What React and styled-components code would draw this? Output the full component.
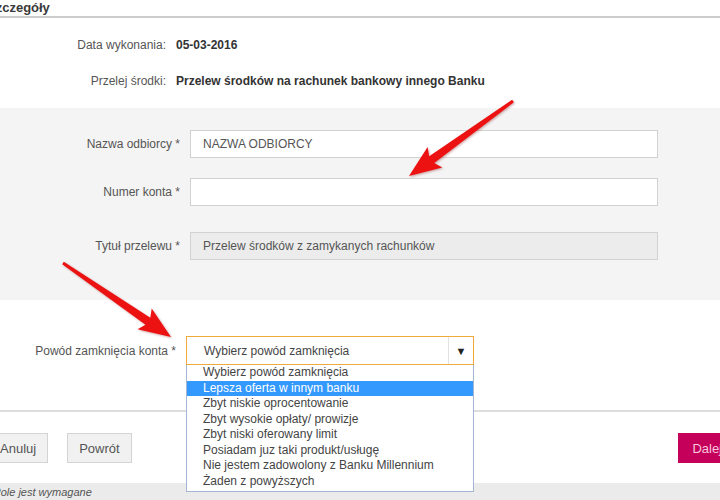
import React from 'react';
import styled, { createGlobalStyle } from 'styled-components';

const GlobalStyle = createGlobalStyle`
  html, body {
    margin: 0;
    padding: 0;
    background: #ffffff;
    overflow: hidden;
  }
  body {
    font-family: 'Liberation Sans', Arial, sans-serif;
    font-size: 12px;
    color: #555555;
  }
`;

const Screen = styled.div`
  position: relative;
  width: 720px;
  height: 500px;
  overflow: hidden;
`;

const Page = styled.div`
  width: 750px;
  margin-left: -14px;
  display: flex;
  flex-direction: column;
`;

const HeaderBar = styled.div`
  height: 16px;
  line-height: 16px;
  padding-left: 1px;
  border-bottom: 2px solid #cccccc;
  font-size: 13px;
  font-weight: 700;
  color: #3a3a3a;
`;

const InfoSection = styled.div`
  display: flex;
  flex-direction: column;
  padding: 9px 0;
`;

const InfoRow = styled.div`
  display: flex;
  align-items: center;
  gap: 10px;
  height: 36px;
`;

const Label = styled.div`
  width: ${(p) => p.$width}px;
  flex-shrink: 0;
  text-align: right;
  color: #555555;
  white-space: nowrap;
`;

const Value = styled.div`
  font-weight: 700;
  color: #333333;
`;

const GreySection = styled.div`
  display: flex;
  flex-direction: column;
  background: #f4f4f4;
  padding: 22px 0 40px;
`;

const FormRow = styled.div`
  display: flex;
  align-items: center;
  gap: 10px;
  margin-top: ${(p) => p.$mt || 0}px;
`;

const TextField = styled.input`
  box-sizing: border-box;
  width: 468px;
  height: 28px;
  margin: 0;
  padding: 0 12px;
  border: 1px solid #d2d2d2;
  background: ${(p) => (p.$locked ? '#ececec' : '#ffffff')};
  font-family: 'Liberation Sans', Arial, sans-serif;
  font-size: 12px;
  color: #555555;
  outline: none;
`;

const SelectSection = styled.div`
  padding: 36px 0 45px;
  border-bottom: 2px solid #dddddd;
`;

const SelectWrap = styled.div`
  position: relative;
  width: 288px;
`;

const SelectBox = styled.div`
  box-sizing: border-box;
  display: flex;
  height: 29px;
  border: 1px solid #f0a93c;
  background: #ffffff;
`;

const SelectText = styled.div`
  flex: 1;
  display: flex;
  align-items: center;
  padding-left: 17px;
  color: #444444;
`;

const SelectArrow = styled.div`
  width: 24px;
  display: flex;
  align-items: center;
  justify-content: center;
  border-left: 1px solid #e2e2e2;
  font-size: 11px;
  color: #222222;
`;

const OptionList = styled.ul`
  position: absolute;
  top: 100%;
  left: 0;
  z-index: 5;
  box-sizing: border-box;
  width: 100%;
  margin: 0;
  padding: 0 0 2px;
  list-style: none;
  background: #ffffff;
  border: 1px solid #a3b6d3;
  border-top: none;
`;

const Option = styled.li`
  height: 15.5px;
  line-height: 15.5px;
  padding-left: 16px;
  white-space: nowrap;
  color: ${(p) => (p.$active ? '#ffffff' : '#444444')};
  background: ${(p) => (p.$active ? '#3399ff' : 'transparent')};
`;

const ButtonBar = styled.div`
  display: flex;
  align-items: center;
  padding: 21px 0 20px 2px;
`;

const GreyButton = styled.button`
  box-sizing: border-box;
  height: 30px;
  margin: 0 19px 0 0;
  padding: 0 11px;
  border: 1px solid #d4d4d4;
  background: #f1f1f1;
  font-family: 'Liberation Sans', Arial, sans-serif;
  font-size: 13px;
  color: #555555;
`;

const PrimaryButton = styled.button`
  box-sizing: border-box;
  height: 30px;
  margin: 0 0 0 auto;
  padding: 0 14px;
  border: none;
  background: #c4005a;
  font-family: 'Liberation Sans', Arial, sans-serif;
  font-size: 13px;
  color: #f9c6dc;
`;

const Footer = styled.div`
  height: 18px;
  line-height: 18px;
  background: #ebebeb;
  font-size: 11px;
  font-style: italic;
  color: #555555;
`;

const Overlay = styled.svg`
  position: absolute;
  top: 0;
  left: 0;
  pointer-events: none;
  z-index: 10;
  filter: drop-shadow(1px 1px 1px rgba(120, 0, 0, 0.35));
`;

// tapered arrow from tail (x1,y1) to tip (x2,y2)
function arrowPoints(x1, y1, x2, y2) {
  const head = 28;
  const headW = 25;
  const tailW = 3;
  const neckW = 8.5;
  const dx = x2 - x1;
  const dy = y2 - y1;
  const len = Math.hypot(dx, dy);
  const ux = dx / len;
  const uy = dy / len;
  const nx = -uy;
  const ny = ux;
  const neck = [x2 - ux * head, y2 - uy * head];
  const barb = [x2 - ux * (head + 4), y2 - uy * (head + 4)];
  const pts = [
    [x1 + (nx * tailW) / 2, y1 + (ny * tailW) / 2],
    [neck[0] + (nx * neckW) / 2, neck[1] + (ny * neckW) / 2],
    [barb[0] + (nx * headW) / 2, barb[1] + (ny * headW) / 2],
    [x2, y2],
    [barb[0] - (nx * headW) / 2, barb[1] - (ny * headW) / 2],
    [neck[0] - (nx * neckW) / 2, neck[1] - (ny * neckW) / 2],
    [x1 - (nx * tailW) / 2, y1 - (ny * tailW) / 2],
  ];
  return pts.map((p) => p.map((v) => v.toFixed(1)).join(',')).join(' ');
}

const reasons = [
  'Wybierz powód zamknięcia',
  'Lepsza oferta w innym banku',
  'Zbyt niskie oprocentowanie',
  'Zbyt wysokie opłaty/ prowizje',
  'Zbyt niski oferowany limit',
  'Posiadam juz taki produkt/usługę',
  'Nie jestem zadowolony z Banku Millennium',
  'Żaden z powyższych',
];

export default function App() {
  return (
    <Screen>
      <GlobalStyle />
      <Page>
        <HeaderBar>Szczegóły</HeaderBar>

        <InfoSection>
          <InfoRow>
            <Label $width={180}>Data wykonania:</Label>
            <Value>05-03-2016</Value>
          </InfoRow>
          <InfoRow>
            <Label $width={180}>Przelej środki:</Label>
            <Value>Przelew środków na rachunek bankowy innego Banku</Value>
          </InfoRow>
        </InfoSection>

        <GreySection>
          <FormRow>
            <Label $width={194}>Nazwa odbiorcy *</Label>
            <TextField readOnly value="NAZWA ODBIORCY" />
          </FormRow>
          <FormRow $mt={20}>
            <Label $width={194}>Numer konta *</Label>
            <TextField readOnly value="" />
          </FormRow>
          <FormRow $mt={26}>
            <Label $width={194}>Tytuł przelewu *</Label>
            <TextField $locked readOnly value="Przelew środków z zamykanych rachunków" />
          </FormRow>
        </GreySection>

        <SelectSection>
          <FormRow>
            <Label $width={190}>Powód zamknięcia konta *</Label>
            <SelectWrap>
              <SelectBox>
                <SelectText>Wybierz powód zamknięcia</SelectText>
                <SelectArrow>▼</SelectArrow>
              </SelectBox>
              <OptionList>
                {reasons.map((r, i) => (
                  <Option key={r} $active={i === 1}>
                    {r}
                  </Option>
                ))}
              </OptionList>
            </SelectWrap>
          </FormRow>
        </SelectSection>

        <ButtonBar>
          <GreyButton>Anuluj</GreyButton>
          <GreyButton>Powrót</GreyButton>
          <PrimaryButton>Dalej</PrimaryButton>
        </ButtonBar>

        <Footer>* Pole jest wymagane</Footer>
      </Page>

      <Overlay width="720" height="500" viewBox="0 0 720 500">
        <polygon points={arrowPoints(513, 101, 409, 176)} fill="#ec1212" />
        <polygon points={arrowPoints(63, 263, 171, 337)} fill="#ec1212" />
      </Overlay>
    </Screen>
  );
}
